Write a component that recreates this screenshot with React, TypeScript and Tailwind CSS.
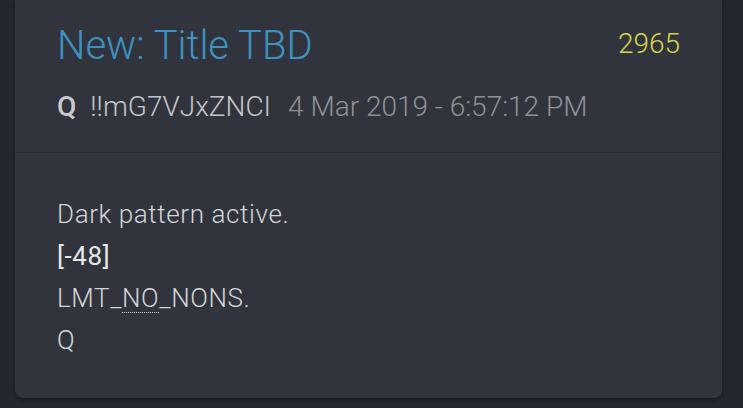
export default function App() {
  return (
    <div className="min-h-[408px] w-full bg-[#25272e] px-[15px] pr-[21px] font-['Roboto_Light','Roboto',sans-serif] font-light">
      <div className="rounded-b-lg bg-[#31343c] shadow-[0_2px_4px_rgba(0,0,0,0.35)]">
        <div className="border-b border-[#2a2c33] px-[42px] pb-[28px] pt-[23px]">
          <div className="flex items-start justify-between">
            <h1 className="text-[40px] leading-[46px] text-[#3c93c3]">New: Title TBD</h1>
            <span className="mt-[5px] text-[28px] leading-[32px] text-[#d6d44c]">2965</span>
          </div>
          <div className="mt-[21px] flex items-baseline text-[28px] leading-[34px]">
            <span className="font-['Roboto',sans-serif] font-medium text-[#c9cacc]">Q</span>
            <span className="ml-[14px] text-[#c4c5c8]">!!mG7VJxZNCI</span>
            <span className="ml-[17px] text-[#8f9196]">4 Mar 2019 - 6:57:12 PM</span>
          </div>
        </div>
        <div className="px-[42px] pb-[37px] pt-[40px] text-[26px] leading-[42px] tracking-[0.6px] text-[#d4d5d8]">
          <div>Dark pattern active.</div>
          <div className="font-['Roboto',sans-serif] font-normal text-[#e6e6e8]">[-48]</div>
          <div>
            LMT_
            <abbr className="underline decoration-dotted decoration-1 underline-offset-[5px]" title="NO">
              NO
            </abbr>
            _NONS.
          </div>
          <div>Q</div>
        </div>
      </div>
    </div>
  );
}
